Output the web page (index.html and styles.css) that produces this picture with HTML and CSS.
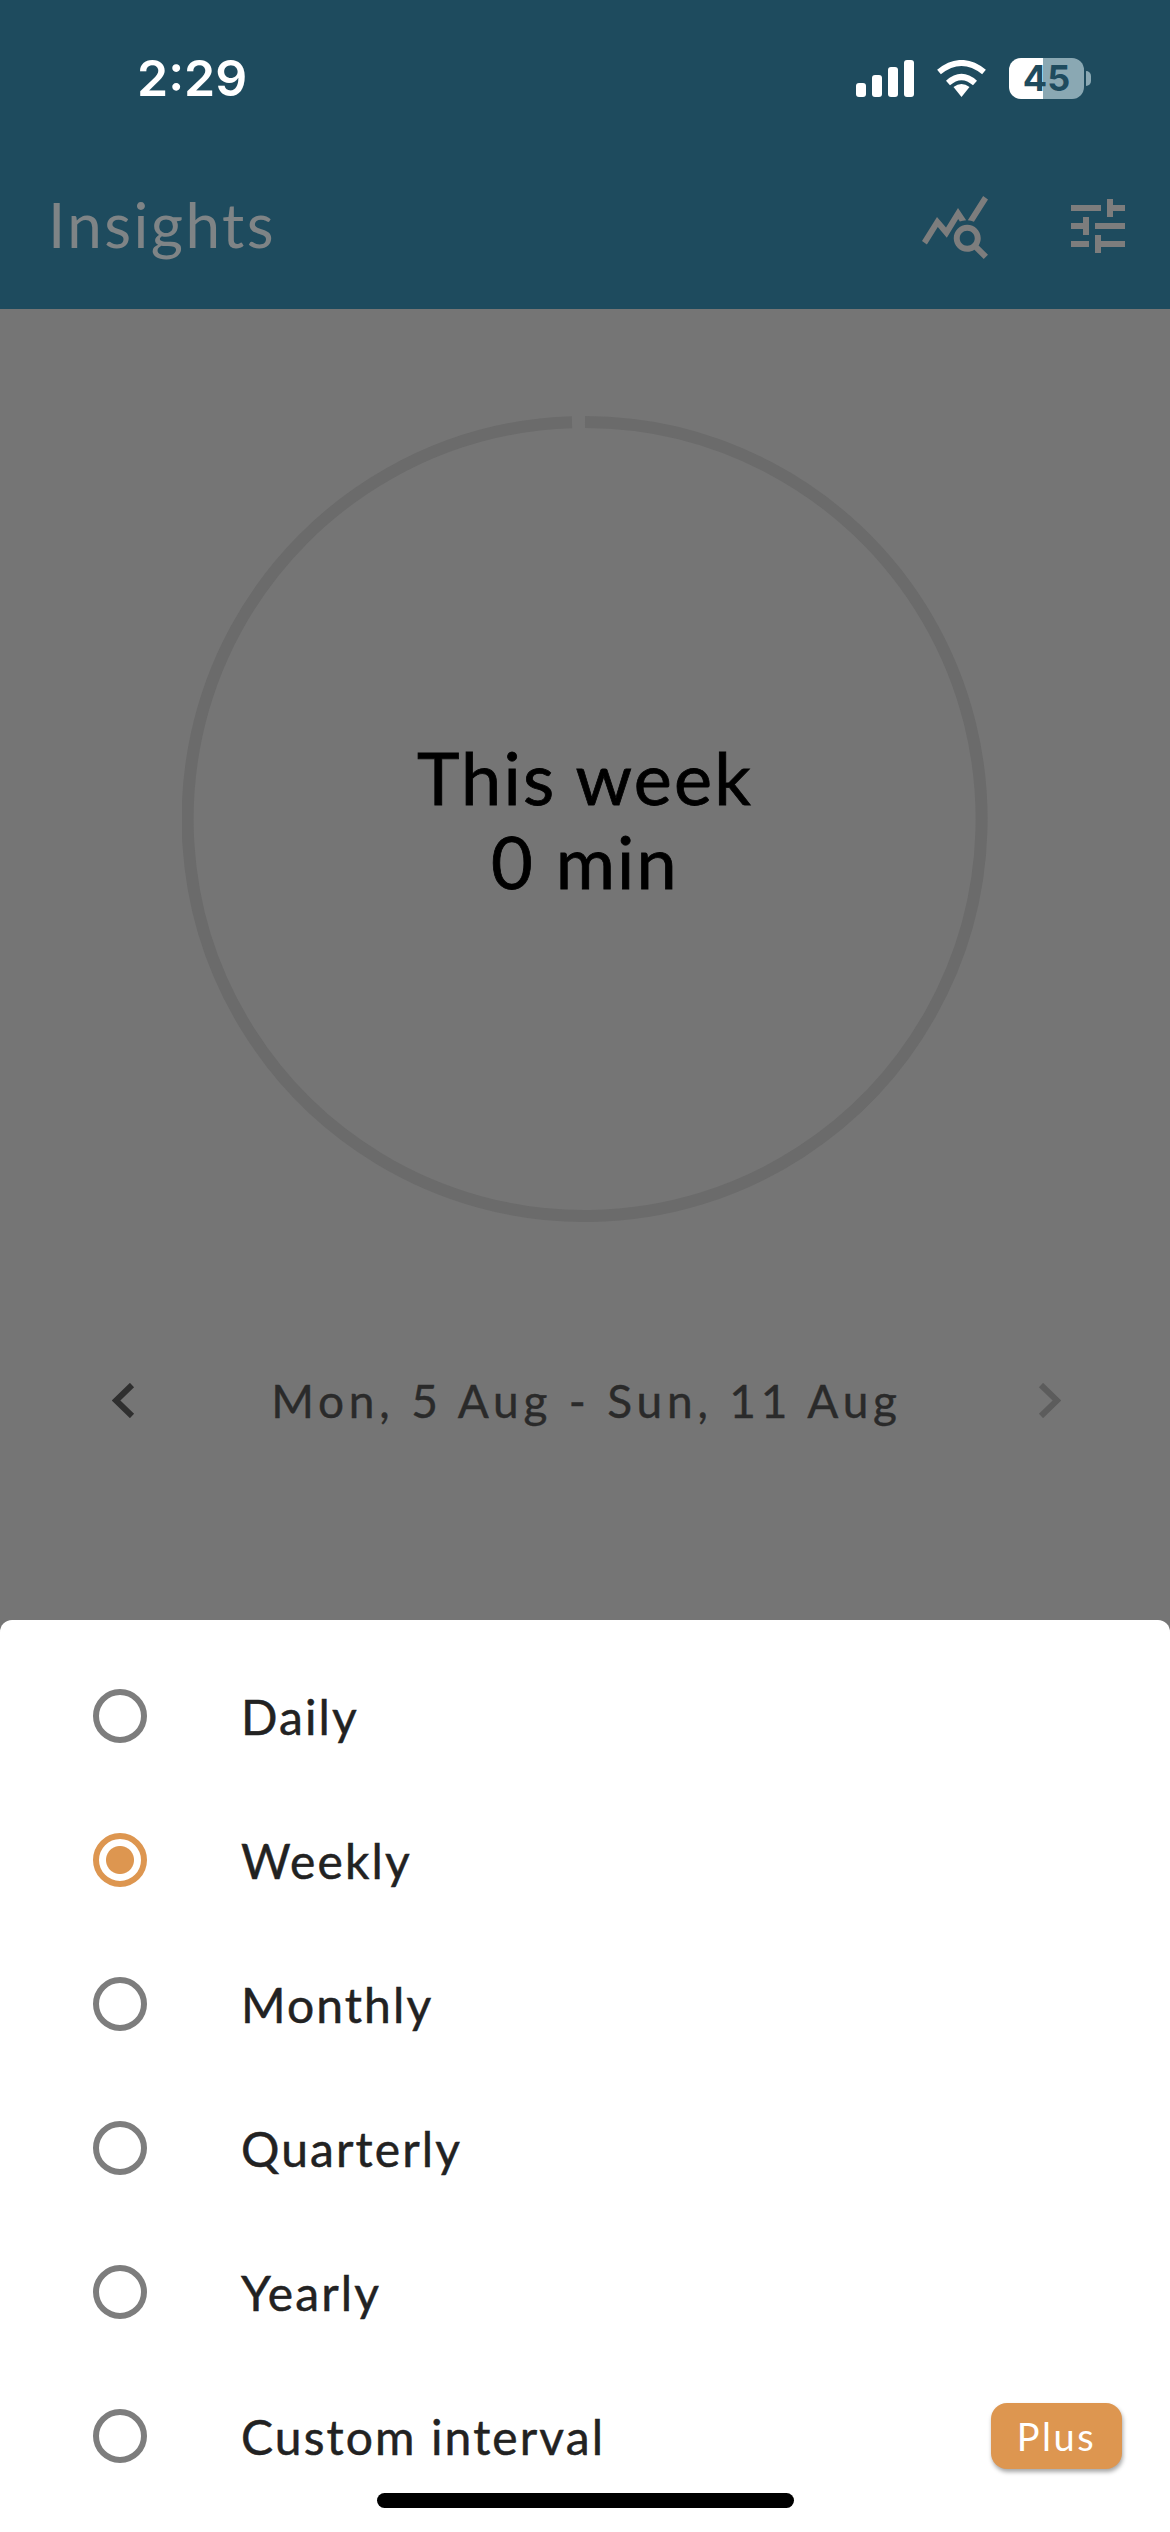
FILE: index.html
```html
<!DOCTYPE html>
<html lang="en">
<head>
    <meta charset="UTF-8">
    <meta name="viewport" content="width=device-width, initial-scale=1.0">
    <title>Insights</title>
    <link rel="stylesheet" href="styles.css">
</head>
<body>
    <div class="screen">
        <header class="top">
            <div class="status">
                <span class="time">2:29</span>
                <div class="status-icons">
                    <svg width="58" height="37" viewBox="0 0 58 37" fill="#fff">
                        <rect x="0" y="23" width="10" height="14" rx="3"/>
                        <rect x="16" y="15" width="10" height="22" rx="3"/>
                        <rect x="32" y="7" width="10" height="30" rx="3"/>
                        <rect x="48" y="0" width="10" height="37" rx="3"/>
                    </svg>
                    <svg width="51" height="37" viewBox="0 0 51 37">
                        <path d="M3 12Q25.5 -6 48 12M12 23Q25.5 11 39 23" fill="none" stroke="#fff" stroke-width="6"/>
                        <path d="M17.5 27Q25.5 21 33.5 27L25.5 37Z" fill="#fff"/>
                    </svg>
                    <div class="battery">45</div>
                </div>
            </div>
            <div class="toolbar">
                <h1 class="title">Insights</h1>
                <div class="actions">
                    <svg class="icon" viewBox="0 0 24 24"><path d="M19.88 18.47c.44-.7.7-1.51.7-2.39 0-2.49-2.01-4.5-4.5-4.5s-4.5 2.01-4.5 4.5 2.01 4.5 4.49 4.5c.88 0 1.7-.26 2.39-.7L21.58 23 23 21.59l-3.12-3.12zm-3.8.11c-1.38 0-2.5-1.12-2.5-2.5s1.12-2.5 2.5-2.5 2.5 1.12 2.5 2.5-1.12 2.5-2.5 2.5zm-.36-8.5c-.74.02-1.45.18-2.1.45l-.55-.83-3.8 6.18-3.01-3.52-3.63 5.81L1 17l5-8 3 3.5L13 6l2.72 4.08zm2.59.5c-.64-.28-1.33-.45-2.05-.49L21.38 2 23 3.18l-4.69 7.4z"/></svg>
                    <svg class="icon" viewBox="0 0 24 24"><path d="M3 17v2h6v-2H3zM3 5v2h10V5H3zm10 16v-2h8v-2h-8v-2h-2v6h2zM7 9v2H3v2h4v2h2V9H7zm14 4v-2H11v2h10zm-6-4h2V7h4V5h-4V3h-2v6z"/></svg>
                </div>
            </div>
        </header>

        <main class="content">
            <div class="ring">
                <svg class="ring-arc" width="806" height="806" viewBox="0 0 806 806">
                    <path d="M403 6A397 397 0 1 1 390 6.2" fill="none" stroke="#6b6b6b" stroke-width="12"/>
                </svg>
                <div class="ring-label">This week<br>0 min</div>
            </div>
            <div class="range">
                <svg width="23" height="35" viewBox="0 0 23 35"><path d="M20 2L4 17.5L20 33" fill="none" stroke="#2f2f2f" stroke-width="6"/></svg>
                <span class="range-label">Mon, 5 Aug - Sun, 11 Aug</span>
                <svg width="23" height="35" viewBox="0 0 23 35"><path d="M3 2L19 17.5L3 33" fill="none" stroke="#5c5c5c" stroke-width="6"/></svg>
            </div>
        </main>

        <section class="sheet">
            <div class="option"><span class="radio"></span><span class="option-label">Daily</span></div>
            <div class="option"><span class="radio selected"></span><span class="option-label">Weekly</span></div>
            <div class="option"><span class="radio"></span><span class="option-label">Monthly</span></div>
            <div class="option"><span class="radio"></span><span class="option-label">Quarterly</span></div>
            <div class="option"><span class="radio"></span><span class="option-label">Yearly</span></div>
            <div class="option"><span class="radio"></span><span class="option-label">Custom interval</span><span class="plus">Plus</span></div>
        </section>

        <div class="home-bar"></div>
    </div>
</body>
</html>
```

FILE: styles.css
```css
* {
    box-sizing: border-box;
}

body {
    margin: 0;
    font-family: "Lato", "Noto Sans", sans-serif;
}

.screen {
    position: relative;
    width: 1170px;
    height: 2532px;
    overflow: hidden;
    display: flex;
    flex-direction: column;
    background: #757575;
}

.top {
    height: 309px;
    background: #1e4b5e;
}

.status {
    height: 156px;
    padding: 0 86px 0 137px;
    display: flex;
    align-items: center;
    justify-content: space-between;
}

.time {
    font-family: "Inter", sans-serif;
    font-size: 50px;
    font-weight: 600;
    color: #fff;
}

.status-icons {
    display: flex;
    align-items: center;
    gap: 22px;
}

.battery {
    position: relative;
    width: 75px;
    height: 41px;
    border-radius: 12px;
    background: linear-gradient(to right, #fff 34px, #8aa8b3 34px);
    color: #1e4b5e;
    font-family: "Inter", sans-serif;
    font-size: 36px;
    font-weight: 700;
    line-height: 41px;
    text-align: center;
}

.battery::after {
    content: "";
    position: absolute;
    left: 77px;
    top: 13px;
    width: 5px;
    height: 15px;
    border-radius: 0 8px 8px 0;
    background: #8aa8b3;
}

.toolbar {
    height: 153px;
    padding: 0 36px 14px 48px;
    display: flex;
    align-items: center;
    justify-content: space-between;
}

.title {
    margin: -4px 0 0;
    font-size: 62px;
    font-weight: 400;
    letter-spacing: 2.4px;
    color: #7f8486;
}

.actions {
    display: flex;
    gap: 71px;
}

.icon {
    display: block;
    width: 72px;
    height: 72px;
    fill: #7d7d7d;
}

.content {
    padding-top: 107px;
}

.ring {
    position: relative;
    width: 806px;
    height: 806px;
    margin: 0 auto;
    display: flex;
    align-items: center;
    justify-content: center;
}

.ring-arc {
    position: absolute;
    top: 0;
    left: 0;
}

.ring-label {
    font-size: 72px;
    line-height: 84px;
    letter-spacing: 2.2px;
    -webkit-text-stroke: 0.8px #000;
    text-align: center;
    color: #000;
}

.range {
    height: 60px;
    margin-top: 148px;
    padding: 0 109px 0 112px;
    display: flex;
    align-items: center;
    justify-content: space-between;
}

.range-label {
    font-size: 46px;
    letter-spacing: 4.8px;
    -webkit-text-stroke: 0.4px #2a2a2a;
    color: #2a2a2a;
}

.sheet {
    margin-top: auto;
    height: 912px;
    padding-top: 24px;
    border-radius: 12px 12px 0 0;
    background: #fff;
}

.option {
    height: 144px;
    padding: 0 48px 0 93px;
    display: flex;
    align-items: center;
    gap: 94px;
}

.option-label {
    font-size: 48px;
    letter-spacing: 2.1px;
    -webkit-text-stroke: 0.5px #222;
    color: #222;
}

.radio {
    width: 54px;
    height: 54px;
    border: 6px solid #7d7d7d;
    border-radius: 50%;
    flex: none;
}

.radio.selected {
    border-color: #dd9650;
    background: radial-gradient(circle, #dd9650 13.5px, #fff 14.5px);
}

.plus {
    margin-left: auto;
    width: 131px;
    height: 66px;
    border-radius: 16px;
    background: #dd9650;
    box-shadow: 1px 3px 4px rgba(0,0,0,0.35);
    color: #fff;
    font-size: 38px;
    line-height: 66px;
    letter-spacing: 2.5px;
    text-align: center;
}

.home-bar {
    position: absolute;
    left: 377px;
    bottom: 24px;
    width: 417px;
    height: 15px;
    border-radius: 8px;
    background: #000;
}
```
